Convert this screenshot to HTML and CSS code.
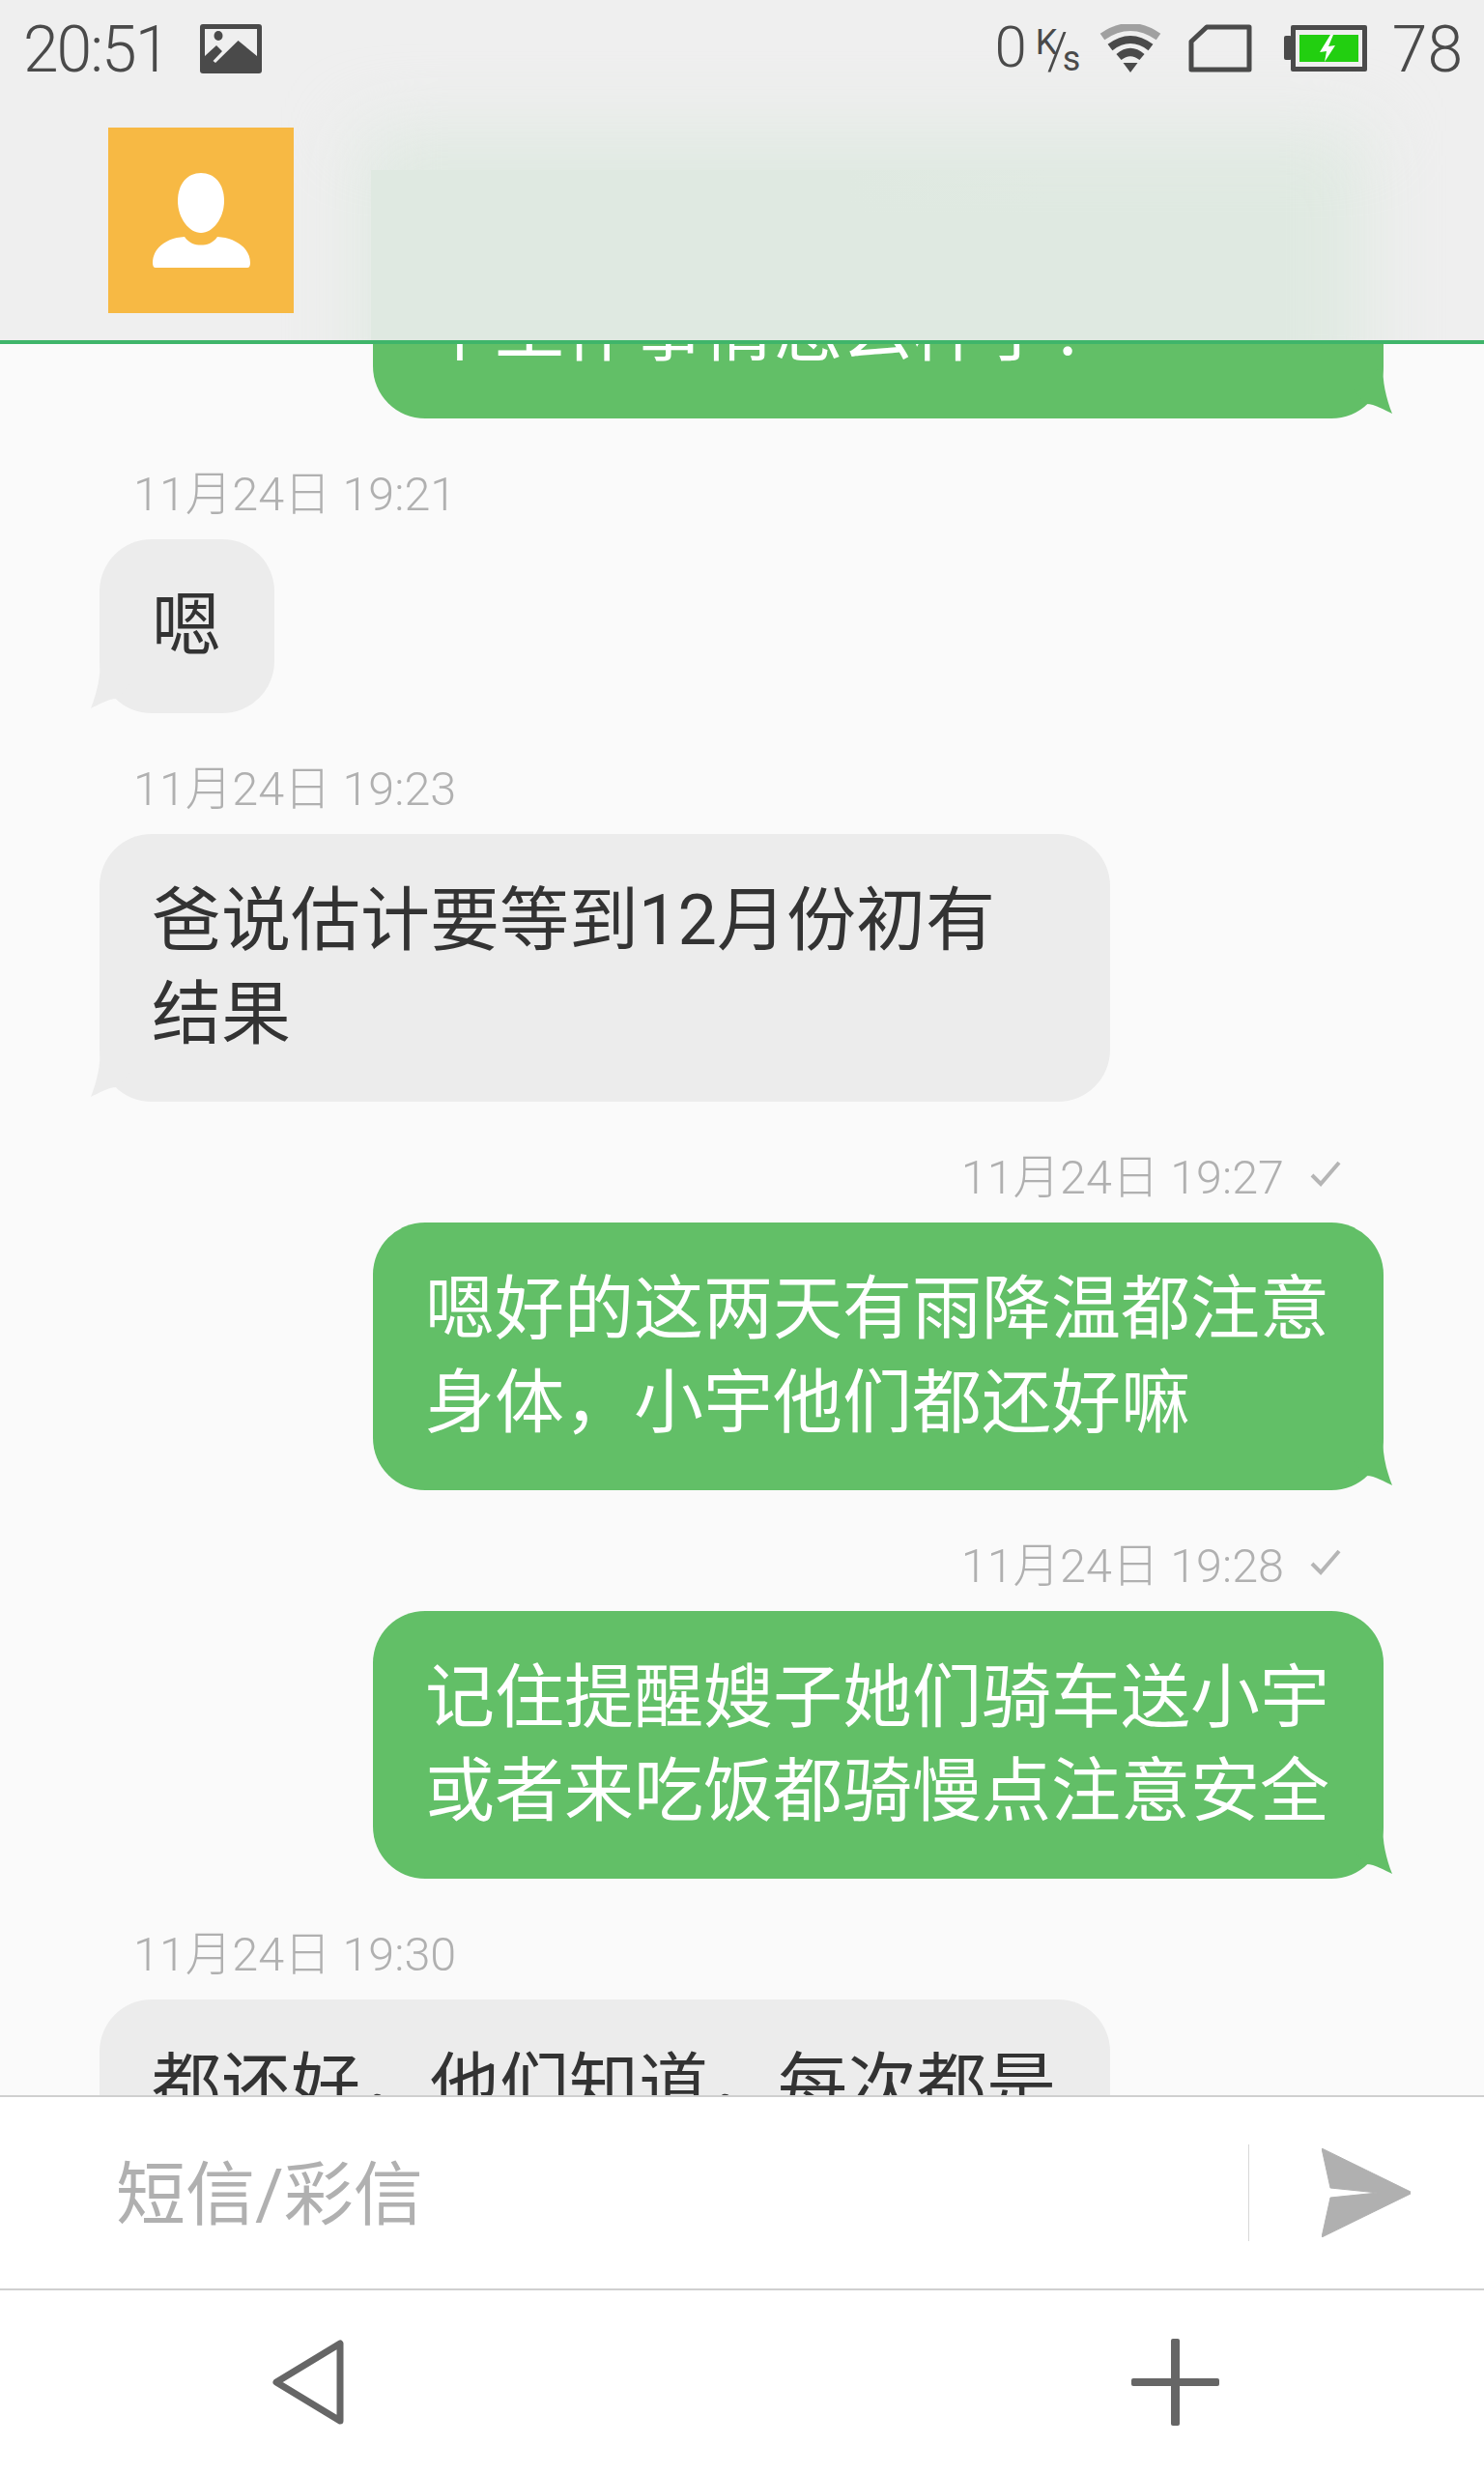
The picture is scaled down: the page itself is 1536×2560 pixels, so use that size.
FILE: index.html
```html
<!DOCTYPE html>
<html lang="zh-CN">
<head>
    <meta charset="utf-8">
    <title>短信</title>
    <link rel="stylesheet" href="styles.css">
</head>
<body>
    <div class="phone">
        <header class="top">
            <div class="blur-name"></div>
            <div class="status">
                <span class="clock">20:51</span>
                <svg class="icon-picture" viewBox="0 0 64 51">
                    <rect width="64" height="51" rx="3" fill="#4a4a4a"/>
                    <path d="M5 5H59V33L39.5 17L16 40L13.5 38L23 28L17 22L5 33Z" fill="#efefef"/>
                    <ellipse cx="19" cy="12" rx="4.5" ry="5" fill="#4a4a4a"/>
                </svg>
                <div class="status-right">
                    <span class="speed">0</span>
                    <span class="speed-unit"><span class="unit-k">K</span><span class="unit-slash">/</span><span class="unit-s">s</span></span>
                    <svg class="icon-wifi" viewBox="0 0 64 50" fill="none">
                        <path d="M3 13Q32 -7 61 13" stroke="#a0a0a0" stroke-width="8"/>
                        <path d="M11 24Q32 8 53 24" stroke="#4a4a4a" stroke-width="8"/>
                        <path d="M20 34Q32 24 44 34" stroke="#4a4a4a" stroke-width="8"/>
                        <path d="M24.5 40H39.5L32 50Z" fill="#4a4a4a"/>
                    </svg>
                    <svg class="icon-sd" viewBox="0 0 66 50" fill="none">
                        <path d="M19 3H63V47H3V18Z" stroke="#4a4a4a" stroke-width="5" stroke-linejoin="round"/>
                    </svg>
                    <svg class="icon-battery" viewBox="0 0 86 48">
                        <rect x="0" y="11" width="8" height="25" rx="2" fill="#4a4a4a"/>
                        <rect x="7" width="79" height="48" rx="2" fill="#4a4a4a"/>
                        <rect x="12" y="5" width="69" height="38" fill="#efefef"/>
                        <rect x="16" y="10" width="61" height="28" fill="#22cf10"/>
                        <path d="M48 10L37 28L44 27L42 38L53 21L46 22L51 10Z" fill="#fff"/>
                    </svg>
                    <span class="battery-level">78</span>
                </div>
            </div>
            <div class="contact">
                <div class="avatar">
                    <svg viewBox="0 0 192 192" fill="#fff">
                        <path d="M96 47C110 47 120 58 120 76C120 94 108 109 96 109C84 109 72 94 72 76C72 58 82 47 96 47Z"/>
                        <path d="M49 145Q46 145 46 140C46 125 60 114 79 113C84 120 90 121.5 96 121.5C102 121.5 108 120 113 113C132 114 147 125 147 140Q147 145 144 145Z"/>
                    </svg>
                </div>
            </div>
        </header>

        <main class="messages">
            <div class="msg sent first">
                <div class="bubble wide">个工作事情怎么样了？
                    <svg class="tail" viewBox="0 0 40 60"><path d="M9 5C11 20 6 40 0 55C8 51 20 44 28 45L40 30Z"/></svg>
                </div>
            </div>

            <div class="msg received">
                <div class="time-row"><span>11月24日 19:21</span></div>
                <div class="bubble">嗯
                    <svg class="tail" viewBox="0 0 40 60"><path d="M9 5C11 20 6 40 0 55C8 51 20 44 28 45L40 30Z"/></svg>
                </div>
            </div>

            <div class="msg received">
                <div class="time-row"><span>11月24日 19:23</span></div>
                <div class="bubble wide">爸说估计要等到12月份初有结果
                    <svg class="tail" viewBox="0 0 40 60"><path d="M9 5C11 20 6 40 0 55C8 51 20 44 28 45L40 30Z"/></svg>
                </div>
            </div>

            <div class="msg sent">
                <div class="time-row"><span>11月24日 19:27</span>
                    <svg class="check" viewBox="0 0 32 28" fill="none"><path d="M2 16L11 25L30 3" stroke="#b5b5b5" stroke-width="4"/></svg>
                </div>
                <div class="bubble wide">嗯好的这两天有雨降温都注意身体，小宇他们都还好嘛
                    <svg class="tail" viewBox="0 0 40 60"><path d="M9 5C11 20 6 40 0 55C8 51 20 44 28 45L40 30Z"/></svg>
                </div>
            </div>

            <div class="msg sent">
                <div class="time-row"><span>11月24日 19:28</span>
                    <svg class="check" viewBox="0 0 32 28" fill="none"><path d="M2 16L11 25L30 3" stroke="#b5b5b5" stroke-width="4"/></svg>
                </div>
                <div class="bubble wide">记住提醒嫂子她们骑车送小宇或者来吃饭都骑慢点注意安全
                    <svg class="tail" viewBox="0 0 40 60"><path d="M9 5C11 20 6 40 0 55C8 51 20 44 28 45L40 30Z"/></svg>
                </div>
            </div>

            <div class="msg received">
                <div class="time-row"><span>11月24日 19:30</span></div>
                <div class="bubble wide">都还好，他们知道，每次都是</div>
            </div>
        </main>

        <div class="composer">
            <div class="placeholder">短信/彩信</div>
            <div class="send">
                <svg viewBox="0 0 92 92"><path d="M0 0L92 45L92 47L0 92L9 51L58 46L9 41Z" fill="#b0b0b0" stroke="#b0b0b0" stroke-width="1" stroke-linejoin="round"/></svg>
            </div>
        </div>

        <nav class="bottom-nav">
            <svg class="nav-back" viewBox="0 0 74 88" fill="none"><path d="M70 4V84L4 44Z" stroke="#666" stroke-width="7" stroke-linejoin="round"/></svg>
            <svg class="nav-plus" viewBox="0 0 91 90" fill="#666"><rect x="41" width="9" height="90" rx="2"/><rect y="41" width="91" height="8" rx="2"/></svg>
        </nav>
    </div>
</body>
</html>
```

FILE: styles.css
```css
html, body {
    margin: 0;
    padding: 0;
}

body {
    font-family: Roboto, "Noto Sans CJK SC", sans-serif;
    font-weight: 300;
    background-color: #fafafa;
}

.phone {
    width: 1536px;
    height: 2560px;
    display: flex;
    flex-direction: column;
    overflow: hidden;
}

/* status bar + contact */
.top {
    position: relative;
    height: 352px;
    flex-shrink: 0;
    overflow: hidden;
    background-color: #efefef;
    border-bottom: 4px solid #3fb56a;
    z-index: 2;
}

/* the sharp left part of the smudged name, the halo sits behind it */
.blur-name {
    position: absolute;
    left: 384px;
    top: 176px;
    width: 700px;
    height: 200px;
    background: linear-gradient(90deg, #dfe9e1 70%, rgba(223, 233, 225, 0));
}

.blur-name::before {
    content: "";
    position: absolute;
    z-index: -1;
    left: -10px;
    top: -40px;
    width: 1040px;
    height: 300px;
    background-color: #dfe9e1;
    filter: blur(38px);
}

.status {
    position: relative;
    height: 102px;
    padding: 0 22px 0 24px;
    display: flex;
    align-items: flex-start;
    color: #4a4a4a;
}

.clock {
    font-size: 66px;
    line-height: 50px;
    margin-top: 27px;
    letter-spacing: -2px;
}

.icon-picture {
    width: 64px;
    height: 51px;
    margin: 25px 0 0 33px;
}

.status-right {
    margin-left: auto;
    display: flex;
    align-items: flex-start;
}

.speed {
    font-size: 60px;
    line-height: 44px;
    margin-top: 27px;
}

.speed-unit {
    position: relative;
    width: 52px;
    height: 50px;
    margin: 26px 0 0 7px;
    font-size: 36px;
    font-weight: 400;
}

.speed-unit span {
    position: absolute;
    line-height: 36px;
}

.unit-k {
    left: 2px;
    top: 0;
}

.unit-slash {
    left: 14px;
    top: 9px;
    font-size: 54px;
    font-weight: 300;
}

.unit-s {
    left: 30px;
    top: 17px;
}

.icon-wifi {
    width: 64px;
    height: 50px;
    margin: 25px 0 0 16px;
}

.icon-sd {
    width: 66px;
    height: 50px;
    margin: 25px 0 0 28px;
}

.icon-battery {
    width: 86px;
    height: 48px;
    margin: 26px 0 0 33px;
}

.battery-level {
    font-size: 66px;
    line-height: 50px;
    margin: 27px 0 0 26px;
}

.contact {
    position: relative;
    padding: 30px 0 0 112px;
}

.avatar {
    width: 192px;
    height: 192px;
    background-color: #f7b944;
}

.avatar svg {
    display: block;
}

/* conversation */
.messages {
    flex: 1;
    min-height: 0;
    overflow: hidden;
    background-color: #fafafa;
    padding: 0 104px 0 103px;
}

.msg {
    display: flex;
    flex-direction: column;
    margin-top: 44px;
}

.msg.first {
    margin-top: -103px;
}

.msg.sent {
    align-items: flex-end;
}

.msg.received {
    align-items: flex-start;
}

.time-row {
    height: 60px;
    margin-bottom: 21px;
    display: flex;
    align-items: center;
    font-size: 48.5px;
    color: #b0b0b0;
}

.received .time-row {
    padding-left: 35px;
}

.sent .time-row {
    padding-right: 44px;
}

.check {
    width: 32px;
    height: 28px;
    margin-left: 27px;
}

.bubble {
    position: relative;
    box-sizing: border-box;
    padding: 41px 55px 42px 54px;
    border-radius: 54px;
    font-size: 72px;
    font-weight: 400;
    line-height: 97px;
}

.bubble.wide {
    width: 1046px;
}

.received .bubble {
    background-color: #ececec;
    color: #333;
}

.sent .bubble {
    background-color: #62bf67;
    color: #fff;
}

.tail {
    position: absolute;
    bottom: 0;
    width: 40px;
    height: 60px;
}

.received .tail {
    left: -9px;
    fill: #ececec;
}

.sent .tail {
    right: -9px;
    fill: #62bf67;
    transform: scaleX(-1);
}

/* input + bottom nav */
.composer {
    position: relative;
    height: 198px;
    flex-shrink: 0;
    display: flex;
    align-items: center;
    justify-content: space-between;
    background-color: #fff;
    border-top: 2px solid #cfcfcf;
}

.placeholder {
    margin: -10px 0 0 120px;
    font-size: 72px;
    font-weight: 400;
    color: #b0b0b0;
}

.send {
    width: 244px;
    height: 100px;
    display: flex;
    align-items: center;
    box-sizing: border-box;
    padding-left: 75px;
    border-left: 1px solid #d8d8d8;
}

.send svg {
    width: 92px;
    height: 92px;
}

.bottom-nav {
    height: 190px;
    flex-shrink: 0;
    display: flex;
    align-items: center;
    justify-content: space-between;
    padding: 0 274px 0 282px;
    background-color: #fff;
    border-top: 2px solid #cfcfcf;
}

.nav-back {
    width: 74px;
    height: 88px;
}

.nav-plus {
    width: 91px;
    height: 90px;
}
```
